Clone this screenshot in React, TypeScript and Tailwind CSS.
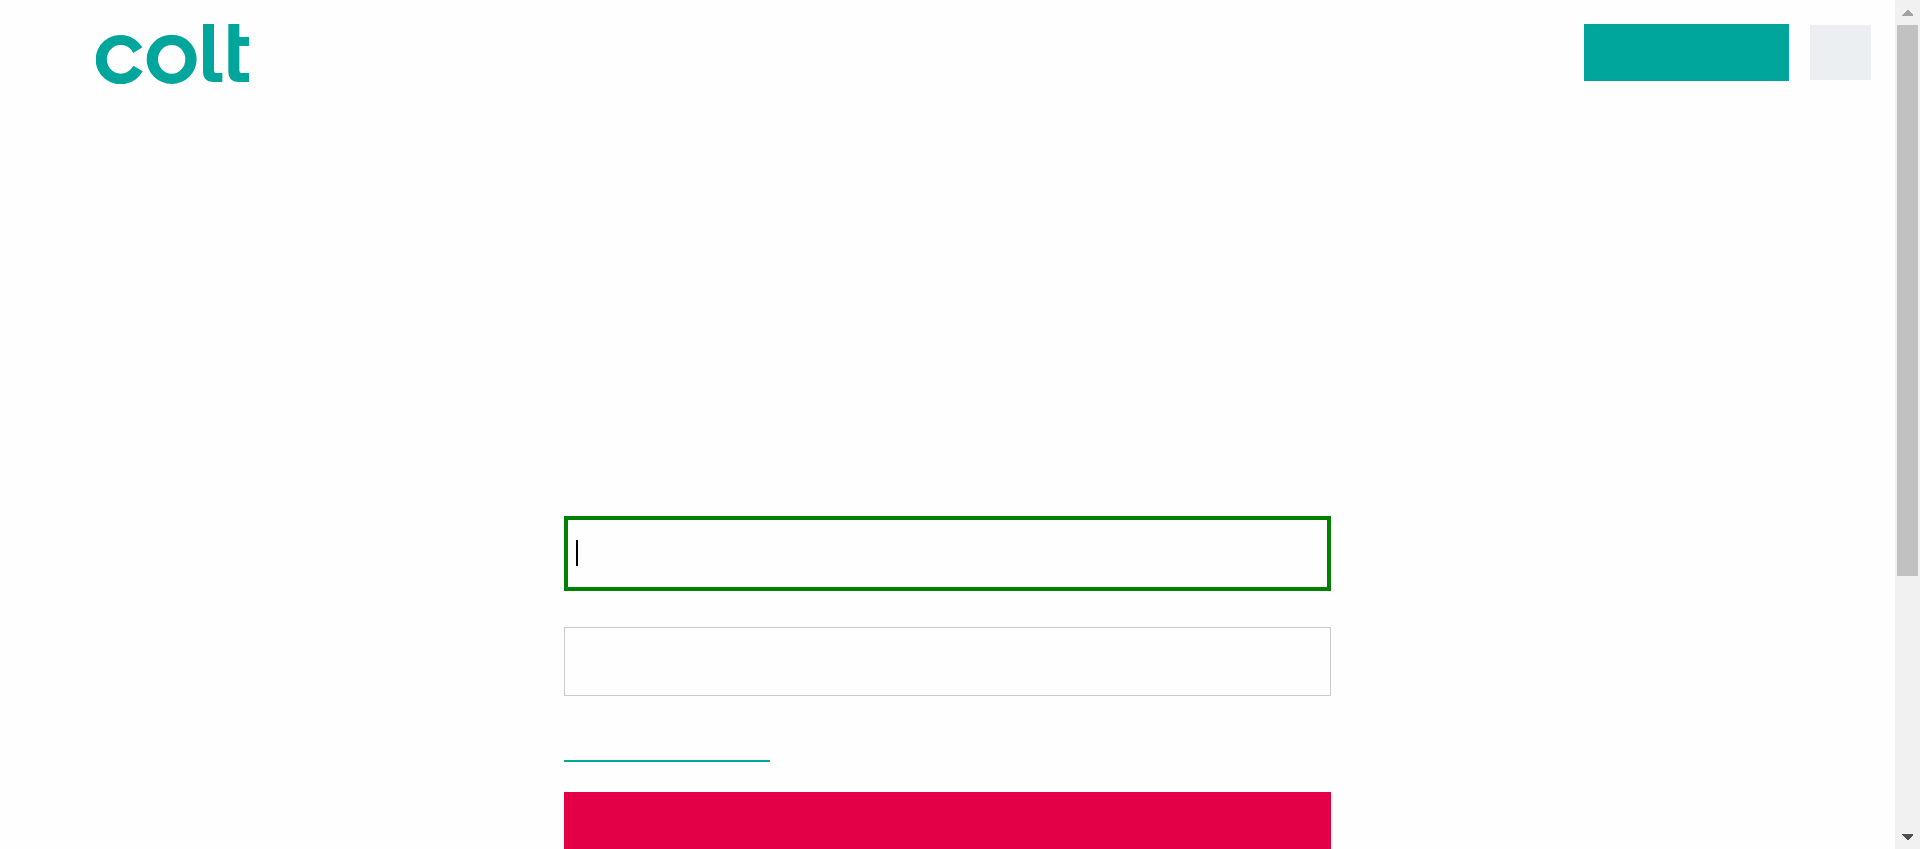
function Logo() {
  return (
    <svg viewBox="0 0 459 180" className="h-[60px] w-[153px]" fill="#00a59b" aria-hidden="true">
      <path d="M139 70A75 74 0 1 0 140 142L112 125A42 43 0 1 1 112 87Z" />
      <path
        fillRule="evenodd"
        d="M227 32a75 74 0 1 0 0 148a75 74 0 1 0 0-148ZM227 63a41 43 0 1 1 0 86a41 43 0 1 1 0-86Z"
      />
      <path d="M321 0H354V140Q354 147 361 147H379V174H350Q321 173 321 143Z" />
      <path d="M397 0H430V39H459V66H430V140Q430 147 437 147H459V174H426Q397 173 397 143Z" />
    </svg>
  );
}

function ScrollRail() {
  return (
    <div className="flex w-[25px] shrink-0 flex-col bg-[#f1f1f1]" aria-hidden="true">
      <div className="flex h-[25px] shrink-0 items-start justify-center pt-2.5">
        <svg viewBox="0 0 11 6" className="h-1.5 w-[11px]" fill="#a3a3a3" shapeRendering="crispEdges">
          <path d="M0 6V5L5 0H6L11 5V6Z" />
        </svg>
      </div>
      <div className="flex-1 px-0.5">
        <div className="h-[69%] bg-[#c1c1c1]" />
      </div>
      <div className="flex h-[25px] shrink-0 items-start justify-center pt-2.5">
        <svg viewBox="0 0 11 6" className="h-1.5 w-[11px]" fill="#505050" shapeRendering="crispEdges">
          <path d="M0 0H11V1L6 6H5L0 1Z" />
        </svg>
      </div>
    </div>
  );
}

export default function App() {
  return (
    <div className="flex h-screen bg-[#fefefe] font-['Open_Sans',sans-serif]">
      <div className="min-w-0 flex-1 overflow-hidden">
        <header className="flex items-start justify-between pt-6 pr-6 pl-24">
          <a href="#home" aria-label="Colt">
            <Logo />
          </a>
          <div className="flex items-center gap-[21px]">
            <button type="button" aria-label="Contact" className="h-[57px] w-[205px] bg-[#00a59b]" />
            <button type="button" aria-label="Menu" className="h-[55px] w-[61px] bg-[#ebeff2]" />
          </div>
        </header>

        <main className="px-6 pt-[432px]">
          <form className="mx-auto flex max-w-[767px] flex-col items-start">
            <div className="relative w-full">
              <input
                type="text"
                aria-label="Username"
                className="block h-[75px] w-full border-4 border-[#008000] bg-[#fefefe] px-2 text-xl caret-transparent outline-none"
              />
              <span className="pointer-events-none absolute top-6 left-3 h-[26px] w-0.5 bg-black" />
            </div>
            <input
              type="password"
              aria-label="Password"
              className="mt-9 block h-[69px] w-full border border-[#cacaca] bg-[#fefefe] px-3 text-xl outline-none"
            />
            <a
              href="#reset"
              aria-label="Forgot your password?"
              className="mt-9 block h-[30px] w-[206px] border-b-2 border-[#00a59b]"
            />
            <button type="submit" aria-label="Log in" className="mt-[30px] h-[57px] w-full bg-[#e40046]" />
          </form>
        </main>
      </div>
      <ScrollRail />
    </div>
  );
}
